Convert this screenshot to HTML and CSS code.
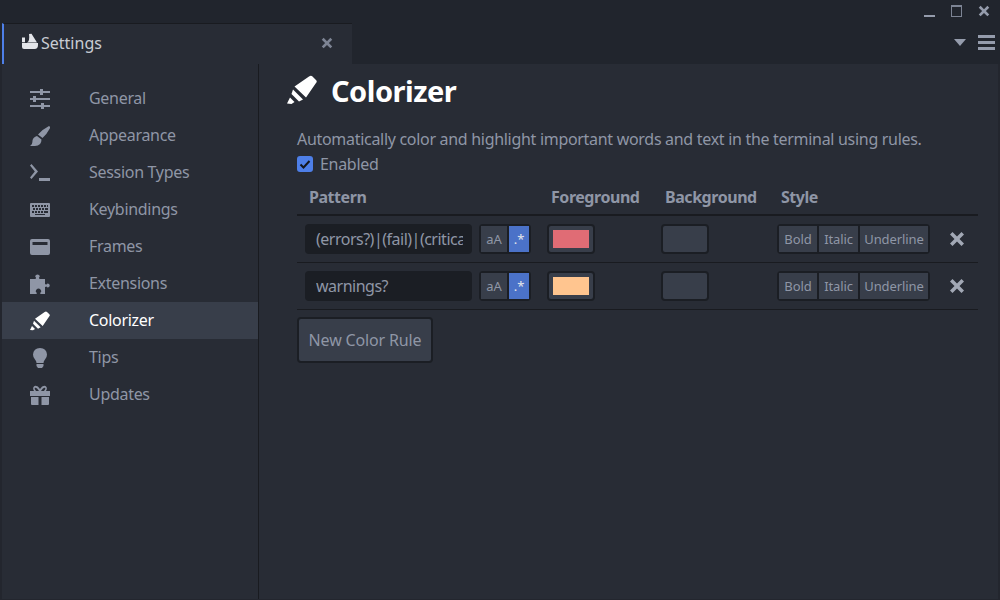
FILE: index.html

```html
<!DOCTYPE html>
<html lang="en">
<head>
  <meta charset="UTF-8">
  <meta name="viewport" content="width=device-width, initial-scale=1.0">
  <title>Settings</title>
  <link rel="stylesheet" href="styles.css">
</head>
<body>

  <svg class="defs" width="0" height="0">
    <symbol id="i-marker" viewBox="0 0 30 30">
      <path d="M7.500 11.500 22 1.500Q24 0 25.500 1.500L29 5Q30.500 6.500 29 8L19 22.500Z"/>
      <path d="M6 14.500 16 24.500 12 26.500 4.500 19Z"/>
      <path d="M3 22.500 7.500 27 4.500 29 0 28.500Z"/>
    </symbol>
    <symbol id="i-sliders" viewBox="0 0 20 20">
      <path d="M0 2h10V0h3v2h7v2h-7v2h-3V4H0zM0 9h3V7h3v2h14v2H6v2H3v-2H0zM0 16h11v-2h3v2h6v2h-6v2h-3v-2H0z"/>
    </symbol>
    <symbol id="i-brush" viewBox="0 0 20 20">
      <path d="M19 0q1.500 .5 .8 2.500Q17 8 12.500 12L8 8.500Q13 3 19 0ZM7 10l4.500 3.500Q11.500 20 5 20H0q2.500-1.500 2.500-5.500Q3 11 7 10Z"/>
    </symbol>
    <symbol id="i-terminal" viewBox="0 0 20 20">
      <path d="M0 2.500 1.500 1 8 8.500 1.500 16 0 14.500 4.800 8.500ZM9 15h11v3H9z"/>
    </symbol>
    <symbol id="i-keyboard" viewBox="0 0 20 20">
      <path fill-rule="evenodd" d="M1 3h18q1 0 1 1v12q0 1-1 1H1q-1 0-1-1V4q0-1 1-1ZM2 5v2h2V5zM5 5v2h2V5zM8 5v2h2V5zM11 5v2h2V5zM14 5v2h2V5zM17 5v2h1V5zM3 8v2h2V8zM6 8v2h2V8zM9 8v2h2V8zM12 8v2h2V8zM15 8v2h3V8zM2 11v2h2v-2zM5 11v2h2v-2zM8 11v2h2v-2zM11 11v2h2v-2zM14 11v2h4v-2zM5 14v1h10v-1z"/>
    </symbol>
    <symbol id="i-frame" viewBox="0 0 20 20">
      <path fill-rule="evenodd" d="M2 2h16q2 0 2 2v12q0 2-2 2H2q-2 0-2-2V4q0-2 2-2ZM2.500 5v3h15V5z"/>
    </symbol>
    <symbol id="i-puzzle" viewBox="0 0 20 20">
      <path d="M0 5h5.500Q6 4 6 3.500 4.500 2.500 6 1q1.500-1 3 0 1.500 1.500 0 2.500 0 .5 .5 1.500H15v5q1 .5 1.500 .5 1-1.500 2.500-.5 1.500 1.500 0 3-1.500 1-2.500-.5-.5 0-1.500 .5V20h-4.500q-.5-1 0-1.500 1.500-1 0-3-2-2-4 0-1.500 2 0 3 .5 .5 0 1.500H0z"/>
    </symbol>
    <symbol id="i-bulb" viewBox="0 0 20 20">
      <path d="M10 0q6.500 .3 7 6.500 0 3-2 5-1.500 1.500-1.500 3.500h-7q0-2-1.500-3.500-2-2-2-5Q3.500 .3 10 0ZM6.500 16h7v2l-1.500 2H8l-1.500-2z"/>
    </symbol>
    <symbol id="i-gift" viewBox="0 0 20 20">
      <path d="M0 6h4Q2 2.500 4.500 1 7.500 0 10 4q2.500-4 5.500-3 2.500 1.500 .5 5h4v5H0zM5 2.800q-1 .8 1 3.200h3Q6.500 2 5 2.800ZM15 2.800Q13.500 2 11 6h3q2-2.400 1-3.200ZM1 12h7.500v8H2q-1 0-1-1zM11.500 12H19v7q0 1-1 1h-6.500z"/>
    </symbol>
    <symbol id="i-settings" viewBox="0 0 16 16">
      <path d="M7 1 9.500 .8 15 9.500H5Q8 8 7 1ZM0 4.500h3v4.800H0zM0 10h16v2q0 4-3.500 4H2q-2 0-2-2z"/>
    </symbol>
    <symbol id="i-close" viewBox="0 0 16 16">
      <path d="M1 3.500 3.500 1 8 5.500 12.500 1 15 3.500 10.500 8 15 12.500 12.500 15 8 10.500 3.500 15 1 12.500 5.500 8z"/>
    </symbol>
  </svg>

  <div class="titlebar">
    <svg class="win-btn win-min" viewBox="0 0 11 11"><path d="M0 8h11v2H0z"/></svg>
    <svg class="win-btn win-max" viewBox="0 0 11 12"><path fill-rule="evenodd" d="M0 0h11v12H0zM1 2v9h9V2z"/></svg>
    <svg class="win-btn win-close"><use href="#i-close"/></svg>
  </div>

  <div class="tabbar">
    <div class="tab">
      <svg class="tab-icon"><use href="#i-settings"/></svg>
      <span class="tab-title">Settings</span>
      <svg class="tab-close"><use href="#i-close"/></svg>
    </div>
    <div class="tab-tools">
      <svg class="caret" viewBox="0 0 12 7"><path d="M0 0h12L6 7z"/></svg>
      <svg class="burger" viewBox="0 0 17 15"><path d="M0 0h17v3H0zM0 6h17v3H0zM0 12h17v3H0z"/></svg>
    </div>
  </div>

  <div class="main">
    <nav class="sidebar">
      <a class="nav-item"><svg class="nav-icon"><use href="#i-sliders"/></svg><span class="nav-label">General</span></a>
      <a class="nav-item"><svg class="nav-icon"><use href="#i-brush"/></svg><span class="nav-label">Appearance</span></a>
      <a class="nav-item"><svg class="nav-icon"><use href="#i-terminal"/></svg><span class="nav-label">Session Types</span></a>
      <a class="nav-item"><svg class="nav-icon"><use href="#i-keyboard"/></svg><span class="nav-label">Keybindings</span></a>
      <a class="nav-item"><svg class="nav-icon"><use href="#i-frame"/></svg><span class="nav-label">Frames</span></a>
      <a class="nav-item"><svg class="nav-icon"><use href="#i-puzzle"/></svg><span class="nav-label">Extensions</span></a>
      <a class="nav-item active"><svg class="nav-icon"><use href="#i-marker"/></svg><span class="nav-label">Colorizer</span></a>
      <a class="nav-item"><svg class="nav-icon"><use href="#i-bulb"/></svg><span class="nav-label">Tips</span></a>
      <a class="nav-item"><svg class="nav-icon"><use href="#i-gift"/></svg><span class="nav-label">Updates</span></a>
    </nav>

    <section class="content">
      <h2 class="page-title"><svg class="title-icon"><use href="#i-marker"/></svg>Colorizer</h2>
      <p class="desc">Automatically color and highlight important words and text in the terminal using rules.</p>
      <label class="enabled">
        <span class="checkbox"><svg viewBox="0 0 16 16"><path d="M3.500 8.500 6.500 11.500 12.500 5" /></svg></span>
        <span class="enabled-label">Enabled</span>
      </label>

      <div class="rule-grid rule-head">
        <div class="head-pattern">Pattern</div>
        <div>Foreground</div>
        <div>Background</div>
        <div>Style</div>
      </div>

      <div class="rule-grid rule-row">
        <div class="pattern-cell">
          <div class="pattern-input"><span>(errors?)|(fail)|(critical)</span></div>
          <div class="btn-group"><span class="btn case">aA</span><span class="btn regex">.*</span></div>
        </div>
        <div><span class="color-box"><span class="swatch red"></span></span></div>
        <div><span class="color-box"></span></div>
        <div class="style-cell">
          <div class="btn-group"><span class="btn bold">Bold</span><span class="btn italic">Italic</span><span class="btn underline">Underline</span></div>
          <svg class="row-delete"><use href="#i-close"/></svg>
        </div>
      </div>

      <div class="rule-grid rule-row">
        <div class="pattern-cell">
          <div class="pattern-input"><span>warnings?</span></div>
          <div class="btn-group"><span class="btn case">aA</span><span class="btn regex">.*</span></div>
        </div>
        <div><span class="color-box"><span class="swatch orange"></span></span></div>
        <div><span class="color-box"></span></div>
        <div class="style-cell">
          <div class="btn-group"><span class="btn bold">Bold</span><span class="btn italic">Italic</span><span class="btn underline">Underline</span></div>
          <svg class="row-delete"><use href="#i-close"/></svg>
        </div>
      </div>

      <button class="new-rule">New Color Rule</button>
    </section>
  </div>

</body>
</html>
```

FILE: styles.css

```css
* {
  box-sizing: border-box;
}
html, body {
  height: 100%;
}
body {
  margin: 0;
  display: flex;
  flex-direction: column;
  overflow: hidden;
  background-color: #21252d;
  color: #8f96a6;
  font-family: "Noto Sans", sans-serif;
  font-size: 16px;
  letter-spacing: -0.3px;
  fill: currentColor;
}
svg {
  display: block;
  flex: none;
}
.defs {
  position: absolute;
}

/* window chrome */
.titlebar {
  height: 23px;
  display: flex;
  justify-content: flex-end;
  align-items: center;
  padding: 0 10px 0 0;
  color: #959cac;
}
.win-btn {
  width: 11px;
  height: 11px;
  margin-left: 16px;
}
.win-min {
  margin-top: 2px;
}
.win-max {
  height: 12px;
  margin-top: -1px;
  color: #7d8494;
}
.win-close {
  width: 12px;
  height: 12px;
  margin-top: -1px;
}
.tabbar {
  height: 41px;
  display: flex;
  justify-content: space-between;
  padding-left: 2px;
}
.tab {
  width: 350px;
  display: flex;
  align-items: center;
  background-color: #282c35;
  border-left: 2px solid #4e7fe8;
  border-top: 1px solid #191b20;
  padding: 0 19px 0 18px;
  color: #c8ccd4;
  letter-spacing: 0;
}
.tab-icon {
  width: 16px;
  height: 16px;
  margin-right: 3px;
  margin-top: -6px;
  color: #e4e6ea;
}
.tab-title {
  flex: 1;
  padding-bottom: 2px;
}
.tab-close {
  width: 12px;
  height: 12px;
  margin-top: -2px;
  color: #7d8494;
}
.tab-tools {
  display: flex;
  align-items: center;
  gap: 12px;
  padding: 0 5px 3px 0;
  color: #959cac;
}
.caret {
  width: 12px;
  height: 7px;
}
.burger {
  width: 17px;
  height: 15px;
}

.main {
  flex: 1;
  display: flex;
  background-color: #282c35;
  border-left: 2px solid #23262e;
  border-right: 2px solid #23262e;
  border-bottom: 1px solid #23262e;
  min-height: 0;
}

/* sidebar */
.sidebar {
  width: 257px;
  padding-top: 16px;
  border-right: 1px solid #191b20;
}
.nav-item {
  height: 37px;
  display: flex;
  align-items: center;
  padding-left: 28px;
}
.nav-item.active {
  background-color: #383e4a;
  color: #fff;
}
.nav-icon {
  width: 20px;
  height: 20px;
  margin-right: 39px;
}
.nav-label {
  padding-bottom: 2px;
}

/* content */
.content {
  flex: 1;
  padding: 0 20px 0 38px;
}
.page-title {
  display: flex;
  align-items: center;
  height: 30px;
  margin: 11px 0 0 -10px;
  font-size: 29px;
  font-weight: 700;
  letter-spacing: -0.5px;
  color: #fff;
}
.title-icon {
  width: 30px;
  height: 30px;
  margin-right: 14px;
}
.desc {
  margin: 22px 0 0;
  line-height: 24px;
}
.enabled {
  display: flex;
  align-items: center;
  gap: 7px;
  height: 24px;
  margin-top: 1px;
}
.checkbox {
  width: 16px;
  height: 16px;
  border-radius: 3px;
  background-color: #4e7fe8;
}
.checkbox path {
  fill: none;
  stroke: #14161b;
  stroke-width: 2;
}

/* rule table */
.rule-grid {
  display: grid;
  grid-template-columns: 250px 114px 116px 1fr;
  align-items: center;
}
.rule-head {
  height: 40px;
  padding-top: 4px;
  border-bottom: 2px solid #191b20;
  font-weight: 700;
  letter-spacing: -0.45px;
}
.rule-head > div {
  padding-left: 4px;
}
.rule-head .head-pattern {
  padding-left: 12px;
}
.rule-row {
  height: 47px;
  border-bottom: 1px solid #191b20;
}
.pattern-cell {
  display: flex;
  align-items: center;
  gap: 7px;
  padding-left: 8px;
}
.pattern-input {
  width: 167px;
  height: 30px;
  line-height: 30px;
  padding: 0 0 0 11px;
  background-color: #1b1e24;
  border-radius: 4px;
  letter-spacing: -0.5px;
}
.pattern-input span {
  display: block;
  width: 147px;
  overflow: hidden;
  white-space: nowrap;
}
.btn-group {
  display: flex;
  height: 30px;
  border: 2px solid #1b1e24;
  border-radius: 4px;
  background-color: #1b1e24;
  gap: 2px;
}
.btn {
  display: flex;
  align-items: center;
  justify-content: center;
  padding-bottom: 1px;
  background-color: #383e4a;
  font-size: 13px;
  letter-spacing: -0.1px;
}
.case {
  width: 26px;
}
.regex {
  width: 20px;
  background-color: #4b72c8;
  color: #e4e6ea;
}
.bold {
  width: 38px;
}
.italic {
  width: 39px;
}
.underline {
  width: 68px;
}
.color-box {
  display: flex;
  align-items: center;
  justify-content: center;
  width: 48px;
  height: 30px;
  border: 2px solid #1b1e24;
  border-radius: 4px;
  background-color: #383e4a;
}
.swatch {
  width: 36px;
  height: 18px;
}
.red {
  background-color: #e06c75;
}
.orange {
  background-color: #ffc58f;
}
.style-cell {
  display: flex;
  align-items: center;
}
.row-delete {
  width: 16px;
  height: 16px;
  margin-left: 19px;
  color: #a2a8b5;
}
.new-rule {
  display: block;
  width: 136px;
  height: 46px;
  margin-top: 7px;
  padding: 0;
  border: 2px solid #1b1e24;
  border-radius: 4px;
  background-color: #383e4a;
  color: #8f96a6;
  font-family: inherit;
  font-size: 16px;
  letter-spacing: -0.15px;
}
```
